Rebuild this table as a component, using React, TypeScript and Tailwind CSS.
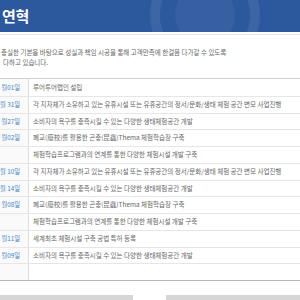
const rows = [
  { date: "월01일", text: "루어투어랩인 설립" },
  { date: "월 31일", text: "각 지자체가 소유하고 있는 유휴시설 또는 유휴공간의 정서/문화/생태 체험 공간 변모 사업진행" },
  { date: "월27일", text: "소비자의 욕구를 충족시킬 수 있는 다양한  생태체험공간 개발" },
  { date: "월02일", text: "폐교(廢校)를 활용한 곤충(昆蟲)Thema 체험학습장 구축" },
  { date: "", text: "체험학습프로그램과의 연계를 통한 다양한 체험시설 개발 구축" },
  { date: "월 10일", text: "각 지자체가 소유하고 있는 유휴시설 또는 유휴공간의 정서/문화/생태 체험 공간 변모 사업진행" },
  { date: "월 14일", text: "소비자의 욕구를 충족시킬 수 있는 다양한  생태체험공간 개발" },
  { date: "월08일", text: "폐교(廢校)를 활용한 곤충(昆蟲)Thema 체험학습장 구축" },
  { date: "", text: "체험학습프로그램과의 연계를 통한 다양한 체험시설 개발 구축" },
  { date: "월11일", text: "세계최초 체험시설 구축 공법 특허 등록" },
  { date: "월09일", text: "소비자의 욕구를 충족시킬 수 있는 다양한  생태체험공간 개발" },
  { date: "", text: "" },
];

export default function App() {
  return (
    <div className="w-[300px] h-[300px] overflow-hidden bg-white font-['Noto_Sans_CJK_KR',sans-serif]">
      {/* title band */}
      <div className="relative h-[32px] overflow-hidden bg-[#2c589d] flex items-center">
        <svg className="absolute left-[150px] top-[-40px]" width="110" height="110" viewBox="0 0 110 110">
          <circle cx="55" cy="55" r="50" fill="none" stroke="#ffffff" strokeOpacity="0.08" strokeWidth="10" />
          <circle cx="55" cy="55" r="30" fill="#ffffff" fillOpacity="0.05" />
        </svg>
        <h1 className="relative pl-[2px] text-[15px] font-bold text-white tracking-tight">연혁</h1>
      </div>
      <div className="mt-[2px] h-px bg-[#e6e6e6]" />

      {/* intro */}
      <div className="pt-[12px] text-[6.5px] leading-[10px] text-[#666] whitespace-nowrap">
        <p className="pl-[1px]">충실한 기본을 바탕으로 성실과 책임 시공을 통해 고객만족에 한걸음 다가갈 수 있도록</p>
        <p className="pl-[3px]">다하고 있습니다.</p>
      </div>

      {/* history table */}
      <div className="mt-[11px] border-t border-[#cfcfcf] border-b border-b-[#b5b5b5]">
        {rows.map((r, i) => (
          <div key={i} className={`flex h-[16.75px] ${i > 0 ? "border-t border-[#e6e6e6]" : ""}`}>
            <div className="w-[29px] shrink-0 border-r border-[#dcdcdc] bg-[#fafafa] flex items-center justify-end pr-[8px] text-[6.3px] text-[#3c84c8] whitespace-nowrap">
              {r.date}
            </div>
            <div className="flex-1 flex items-center pl-[4px] text-[6.5px] text-[#666] whitespace-nowrap overflow-hidden">
              {r.text}
            </div>
          </div>
        ))}
      </div>

      {/* horizontal scrollbar */}
      <div className="mt-[14px] h-[8px] bg-[#d6d6d6] flex">
        <div className="ml-[133px] w-[33px] bg-white" />
      </div>
    </div>
  );
}
